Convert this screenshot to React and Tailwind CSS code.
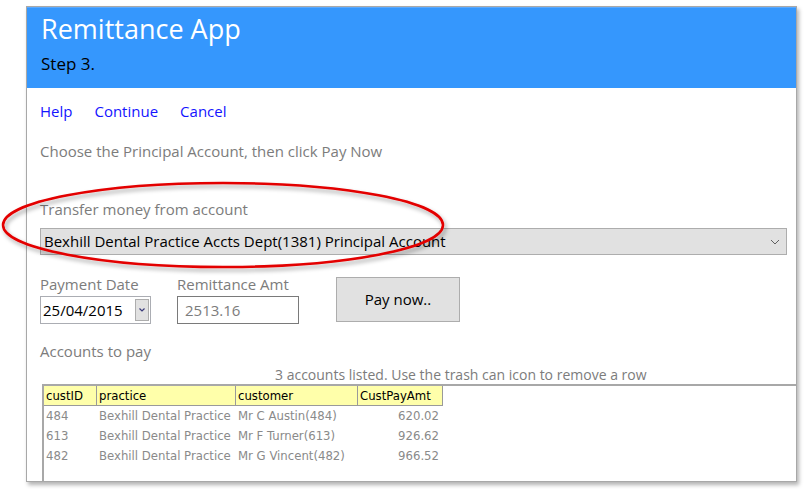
export default function App() {
  const rows = [
    { id: "484", practice: "Bexhill Dental Practice", customer: "Mr C Austin(484)", amt: "620.02" },
    { id: "613", practice: "Bexhill Dental Practice", customer: "Mr F Turner(613)", amt: "926.62" },
    { id: "482", practice: "Bexhill Dental Practice", customer: "Mr G Vincent(482)", amt: "966.52" },
  ];

  return (
    <div className="relative w-[806px] h-[489px] bg-white overflow-hidden font-['Open_Sans',sans-serif]">
      {/* window */}
      <div className="ml-[26px] mt-[6px] w-[771px] h-[476px] bg-white border border-[#a8a8a8] shadow-[2px_3px_4px_rgba(0,0,0,0.3)] flex flex-col">
        {/* header */}
        <div className="h-[81px] bg-[#3597fd] border-t border-[#5aaaff] px-[14px] pt-[3px]">
          <div className="text-white text-[27px] leading-[36px]">Remittance App</div>
          <div className="text-black text-[17px] leading-[22px] mt-[6px]">Step 3.</div>
        </div>

        <div className="pl-[13px] pr-[9px] flex flex-col flex-1">
          {/* links */}
          <div className="flex gap-[22px] mt-[13px] text-[15px] leading-[20px] text-[#1414ff]">
            <span>Help</span>
            <span>Continue</span>
            <span>Cancel</span>
          </div>

          <div className="mt-[20px] text-[15px] leading-[20px] text-[#7c7c7c]">
            Choose the Principal Account, then click Pay Now
          </div>

          <div className="mt-[38px] text-[15px] leading-[20px] text-[#7c7c7c]">
            Transfer money from account
          </div>

          <div className="mt-[9px] h-[27px] bg-[#e1e1e1] border border-[#adadad] flex items-center justify-between pl-[3px] pr-[6px]">
            <span className="text-[15px] text-black">
              Bexhill Dental Practice Accts Dept(1381) Principal Account
            </span>
            <svg width="10" height="6" viewBox="0 0 10 6">
              <path d="M1 1 L5 5 L9 1" fill="none" stroke="#606060" strokeWidth="1" />
            </svg>
          </div>

          {/* date / amount / pay */}
          <div className="flex items-start mt-[19px]">
            <div className="w-[111px]">
              <div className="text-[15px] leading-[20px] text-[#7c7c7c]">Payment Date</div>
              <div className="mt-[2px] h-[28px] border border-[#abadb3] bg-white flex items-center justify-between pl-[2px] pr-[1px]">
                <span className="text-[15px] text-black">25/04/2015</span>
                <div className="w-[14px] h-[22px] bg-[#e1e1e1] border border-[#adadad] flex items-center justify-center">
                  <svg width="6" height="4" viewBox="0 0 6 4">
                    <path d="M0.5 0.5 L3 3 L5.5 0.5" fill="none" stroke="#3a3a7a" strokeWidth="1.2" />
                  </svg>
                </div>
              </div>
            </div>

            <div className="ml-[26px] w-[122px]">
              <div className="text-[15px] leading-[20px] text-[#7c7c7c]">Remittance Amt</div>
              <div className="mt-[2px] h-[28px] border border-[#7a7a7a] bg-white flex items-center pl-[7px]">
                <span className="text-[15px] text-[#7c7c7c]">2513.16</span>
              </div>
            </div>

            <div className="ml-[37px] mt-[3px] w-[124px] h-[45px] bg-[#e1e1e1] border border-[#adadad] flex items-center justify-center text-[15px] text-black">
              Pay now..
            </div>
          </div>

          <div className="mt-[17px] text-[15px] leading-[20px] text-[#7c7c7c]">Accounts to pay</div>

          <div className="mt-[5px] pl-[235px] text-[14px] leading-[18px] text-[#7c7c7c]">
            3 accounts listed. Use the trash can icon to remove a row
          </div>

          {/* table */}
          <div className="ml-[2px] -mr-[9px] flex-1 border-t-2 border-l-2 border-[#a8a8a8] font-['DejaVu_Sans_Condensed','DejaVu_Sans',sans-serif] text-[13px]">
            <div className="flex">
              <div className="w-[53px] h-[20px] bg-[#ffffaa] border-r border-b border-[#9a9a9a] pl-[2px] leading-[20px] text-black">custID</div>
              <div className="w-[139px] h-[20px] bg-[#ffffaa] border-r border-b border-[#9a9a9a] pl-[2px] leading-[20px] text-black">practice</div>
              <div className="w-[122px] h-[20px] bg-[#ffffaa] border-r border-b border-[#9a9a9a] pl-[2px] leading-[20px] text-black">customer</div>
              <div className="w-[85px] h-[20px] bg-[#ffffaa] border-r border-b border-[#9a9a9a] pl-[2px] leading-[20px] text-black">CustPayAmt</div>
            </div>
            {rows.map((r) => (
              <div key={r.id} className="flex h-[20px] leading-[20px] text-[#8a8a8a]">
                <div className="w-[53px] pl-[2px]">{r.id}</div>
                <div className="w-[139px] pl-[2px]">{r.practice}</div>
                <div className="w-[122px] pl-[2px]">{r.customer}</div>
                <div className="w-[85px] pr-[4px] text-right">{r.amt}</div>
              </div>
            ))}
          </div>
        </div>
      </div>

      {/* red annotation ellipse */}
      <svg className="absolute left-0 top-0 pointer-events-none" width="806" height="489">
        <defs>
          <filter id="sh" x="-10%" y="-30%" width="120%" height="160%">
            <feDropShadow dx="2" dy="3" stdDeviation="2" floodColor="#000" floodOpacity="0.35" />
          </filter>
        </defs>
        <ellipse cx="223" cy="225" rx="220" ry="42" fill="none" stroke="#e30000" strokeWidth="2.5" filter="url(#sh)" />
      </svg>
    </div>
  );
}
